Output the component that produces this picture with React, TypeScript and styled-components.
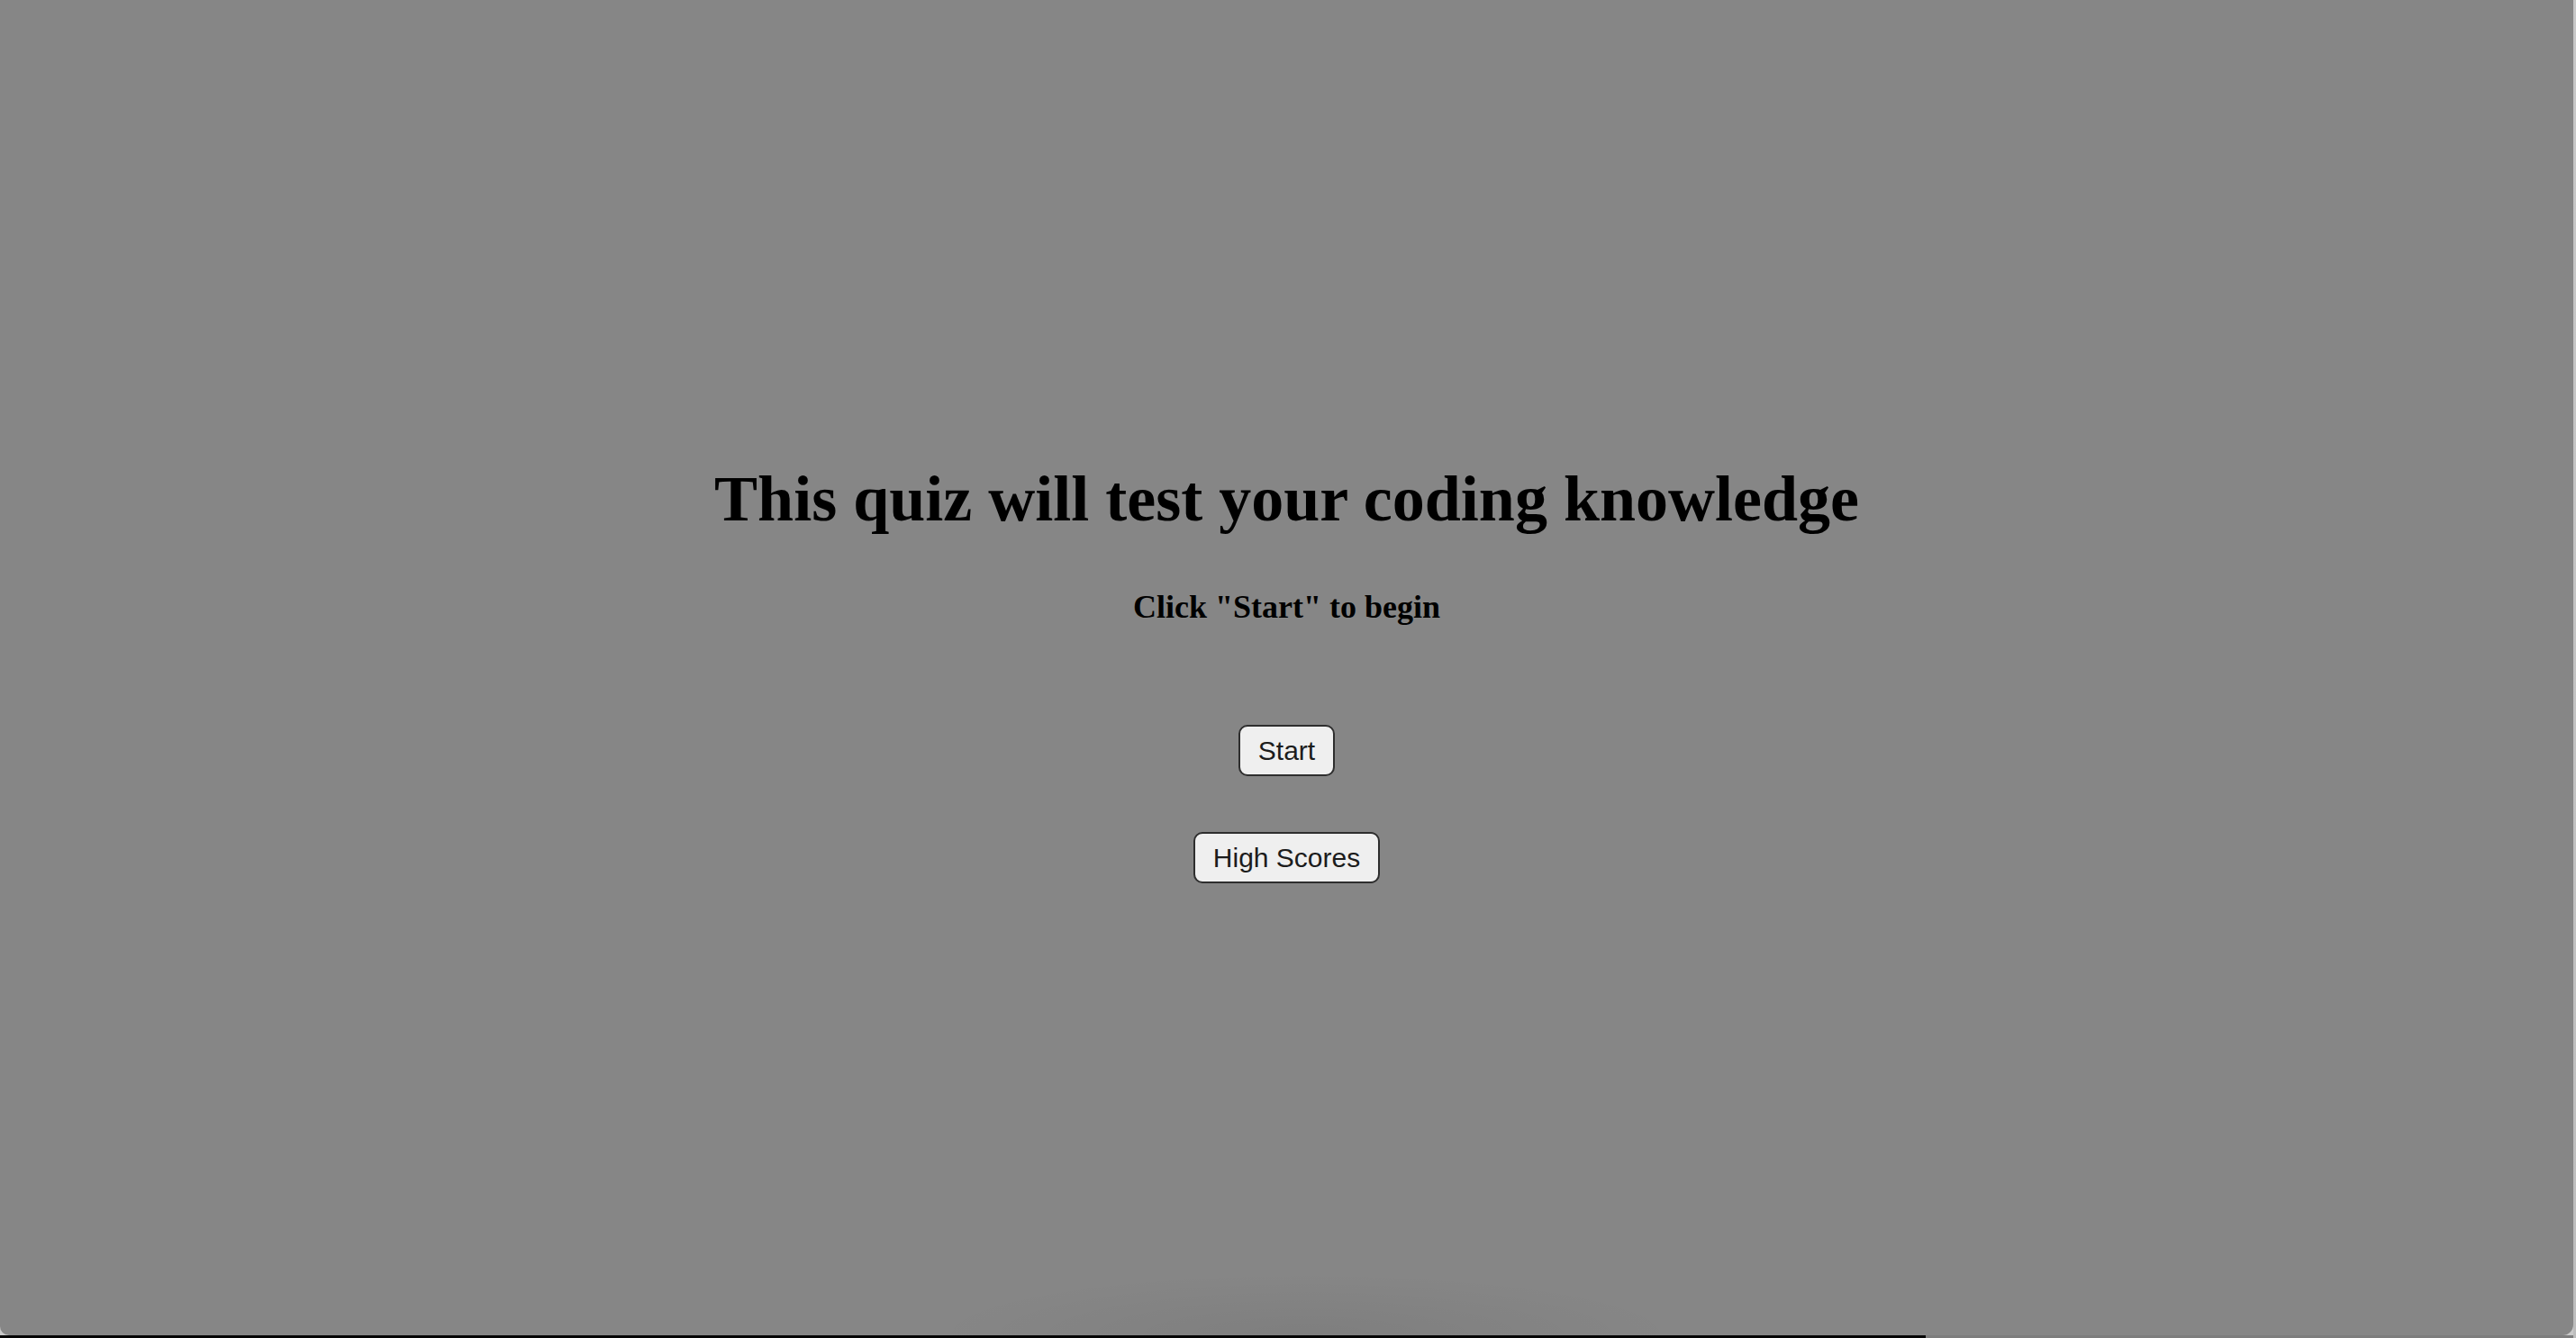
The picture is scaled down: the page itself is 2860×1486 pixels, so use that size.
import React from "react";
import styled, { createGlobalStyle } from "styled-components";

const Global = createGlobalStyle`
  html, body {
    margin: 0;
    padding: 0;
    height: 100%;
    overflow: hidden;
  }
  #root {
    height: 100%;
  }
`;

const Screen = styled.div`
  display: grid;
  grid-template-columns: 1fr 3px;
  grid-template-rows: 1fr 3px;
  width: 2860px;
  height: 1486px;
  background: #c9c9c9;
`;

const Window = styled.main`
  grid-column: 1;
  grid-row: 1;
  display: flex;
  flex-direction: column;
  align-items: center;
  padding-top: 514px;
  background:
    radial-gradient(ellipse 420px 70px at 1450px 100%, rgba(0, 0, 0, 0.06), rgba(0, 0, 0, 0) 100%),
    #868686;
  border-bottom-left-radius: 10px;
  border-bottom-right-radius: 12px;
  box-sizing: border-box;
`;

const EdgeStrip = styled.div`
  grid-column: 2;
  grid-row: 1 / span 2;
  background: linear-gradient(to bottom, #c8c8c8, #bdbdbd);
`;

const BottomBar = styled.div`
  grid-column: 1;
  grid-row: 2;
  display: flex;
`;

const BarSegment = styled.div<{ $tone: string; $grow?: boolean }>`
  background: ${(p) => p.$tone};
  width: ${(p) => (p.$grow ? "auto" : "2138px")};
  flex: ${(p) => (p.$grow ? 1 : "none")};
`;

const Title = styled.h1`
  margin: 0;
  font-family: "Liberation Serif", "Times New Roman", serif;
  font-weight: 700;
  font-size: 72px;
  line-height: 80px;
  color: #000;
  text-align: center;
`;

const Subtitle = styled.h3`
  margin: 59px 0 0;
  font-family: "Liberation Serif", "Times New Roman", serif;
  font-weight: 700;
  font-size: 36px;
  line-height: 42px;
  color: #000;
  text-align: center;
`;

const Button = styled.button<{ $gap: number }>`
  margin-top: ${(p) => p.$gap}px;
  font-family: "Liberation Sans", Arial, Helvetica, sans-serif;
  font-size: 30px;
  line-height: 34px;
  padding: 9.5px 20px;
  color: #1c1c1c;
  background: #efefef;
  border: 2px solid #2e2e2e;
  border-radius: 10px;
  cursor: pointer;
`;

export default function App() {
  return (
    <>
      <Global />
      <Screen>
        <Window>
          <Title>This quiz will test your coding knowledge</Title>
          <Subtitle>Click "Start" to begin</Subtitle>
          <Button $gap={110}>Start</Button>
          <Button $gap={62}>High Scores</Button>
        </Window>
        <EdgeStrip />
        <BottomBar>
          <BarSegment $tone="#050505" />
          <BarSegment $tone="#7d7d7d" $grow />
        </BottomBar>
      </Screen>
    </>
  );
}
